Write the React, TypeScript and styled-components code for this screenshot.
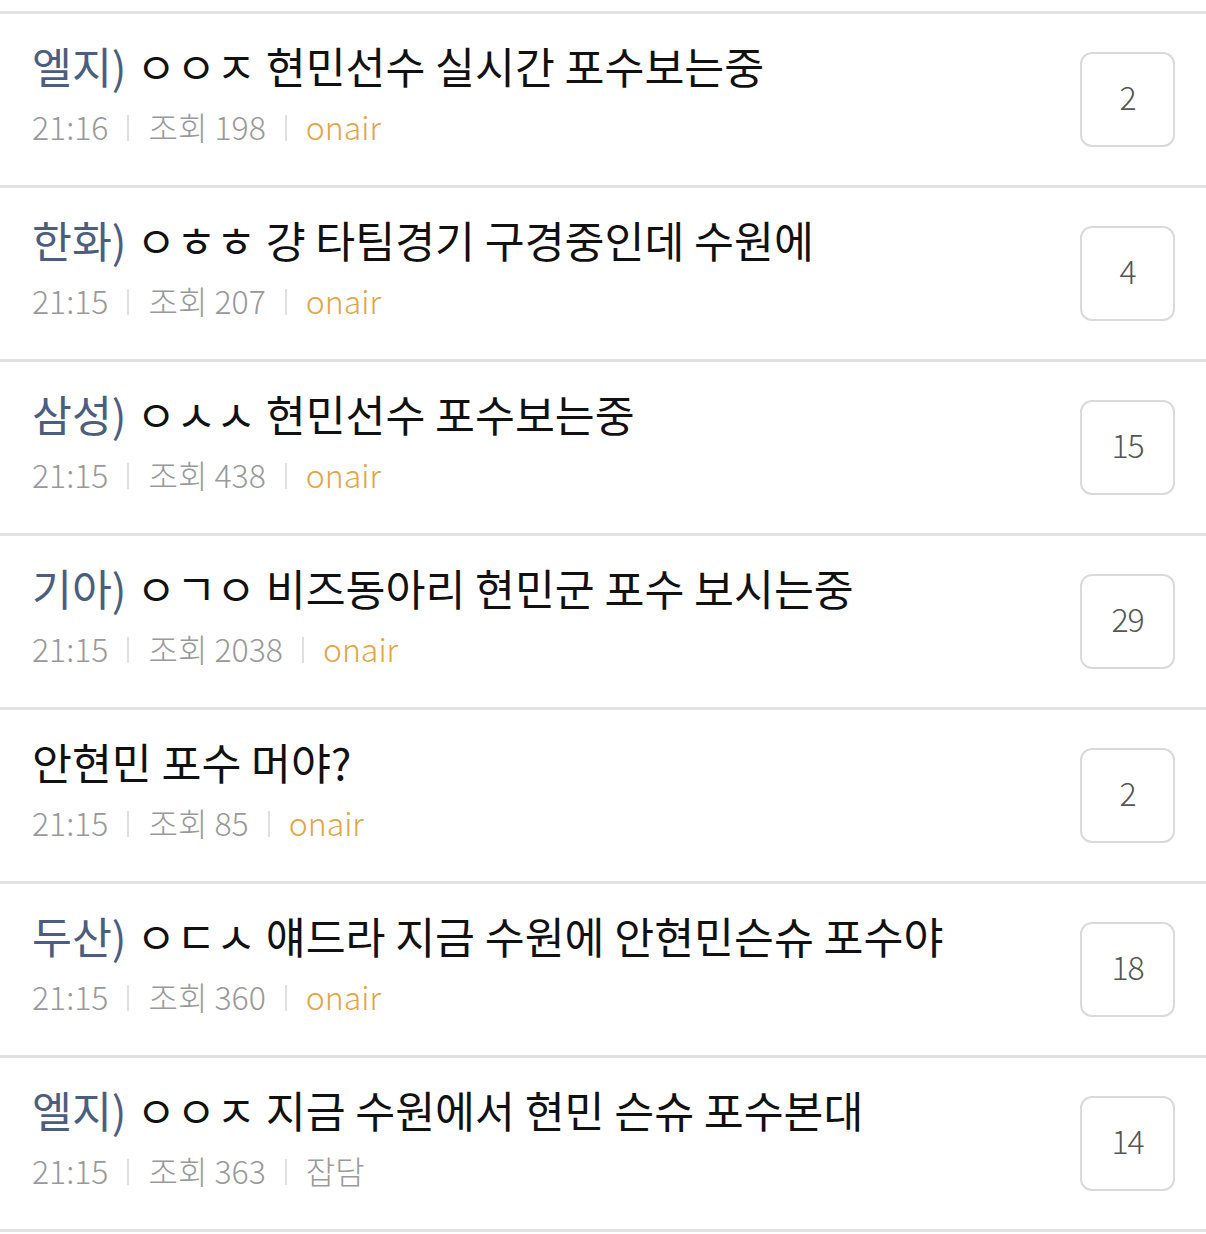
import React from "react";
import styled, { createGlobalStyle } from "styled-components";

const Global = createGlobalStyle`
  html, body { margin: 0; padding: 0; background: #fff; }
  body { font-family: "Noto Sans CJK KR", "Noto Sans", sans-serif; }
`;

const List = styled.ul`
  list-style: none;
  margin: 0;
  padding: 11px 0 0 0;
`;

const Row = styled.li`
  display: flex;
  align-items: center;
  justify-content: space-between;
  height: 171px;
  padding: 0 31px 0 32px;
  border-top: 3px solid #e2e2e2;
  &:last-child { border-bottom: 3px solid #e2e2e2; }
`;

const Texts = styled.div`
  display: flex;
  flex-direction: column;
  gap: 14px;
  margin-top: -13px;
`;

const Title = styled.div`
  font-size: 43.4px;
  line-height: 52px;
  color: #111;
  white-space: nowrap;
`;

const Prefix = styled.span`
  color: #4b5e80;
`;

const Meta = styled.div`
  display: flex;
  align-items: center;
  font-size: 32px;
  font-weight: 300;
  line-height: 42px;
  color: #999;
  white-space: nowrap;
`;

const Sep = styled.span`
  display: inline-block;
  width: 2px;
  height: 26px;
  margin: 4px 19px 0 19px;
  background: #e0e0e0;
`;

const Category = styled.span<{ $onair: boolean }>`
  color: ${(p) => (p.$onair ? "#e3a445" : "#9a9a9a")};
`;

const CountBox = styled.div`
  flex: none;
  box-sizing: border-box;
  width: 95px;
  height: 95px;
  padding-bottom: 7px;
  border: 2px solid #dadada;
  border-radius: 12px;
  display: flex;
  align-items: center;
  justify-content: center;
  font-size: 32px;
  font-weight: 300;
  color: #555;
  letter-spacing: -1px;
`;

type Post = { prefix?: string; title: string; time: string; views: number; cat: string; count: number };

const posts: Post[] = [
  { prefix: "엘지)", title: " ㅇㅇㅈ 현민선수 실시간 포수보는중", time: "21:16", views: 198, cat: "onair", count: 2 },
  { prefix: "한화)", title: " ㅇㅎㅎ 걍 타팀경기 구경중인데 수원에", time: "21:15", views: 207, cat: "onair", count: 4 },
  { prefix: "삼성)", title: " ㅇㅅㅅ 현민선수 포수보는중", time: "21:15", views: 438, cat: "onair", count: 15 },
  { prefix: "기아)", title: " ㅇㄱㅇ 비즈동아리 현민군 포수 보시는중", time: "21:15", views: 2038, cat: "onair", count: 29 },
  { title: "안현민 포수 머야?", time: "21:15", views: 85, cat: "onair", count: 2 },
  { prefix: "두산)", title: " ㅇㄷㅅ 얘드라 지금 수원에 안현민슨슈 포수야", time: "21:15", views: 360, cat: "onair", count: 18 },
  { prefix: "엘지)", title: " ㅇㅇㅈ 지금 수원에서 현민 슨슈 포수본대", time: "21:15", views: 363, cat: "잡담", count: 14 },
];

export default function App() {
  return (
    <>
      <Global />
      <List>
        {posts.map((p, i) => (
          <Row key={i}>
            <Texts>
              <Title>
                {p.prefix && <Prefix>{p.prefix}</Prefix>}
                {p.title}
              </Title>
              <Meta>
                <span>{p.time}</span>
                <Sep />
                <span>조회 {p.views}</span>
                <Sep />
                <Category $onair={p.cat === "onair"}>{p.cat}</Category>
              </Meta>
            </Texts>
            <CountBox>{p.count}</CountBox>
          </Row>
        ))}
      </List>
    </>
  );
}
